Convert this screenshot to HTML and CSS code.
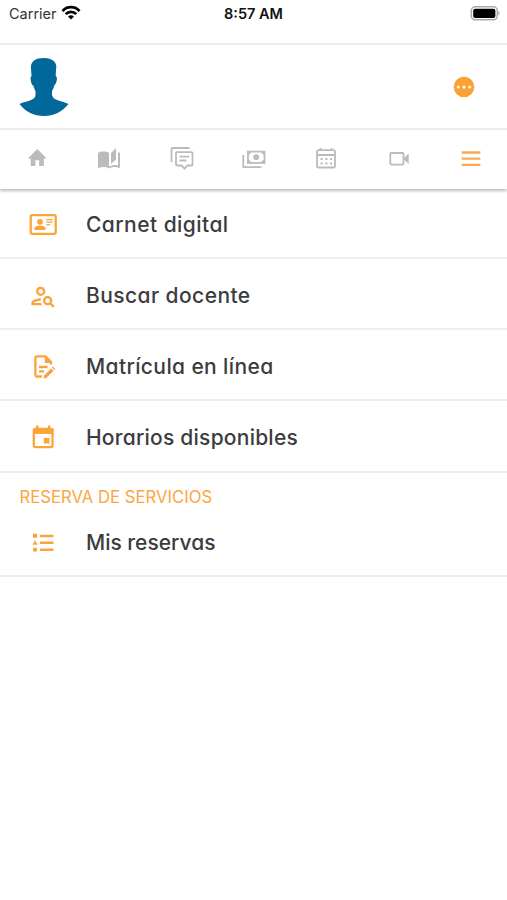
FILE: index.html
```
<!DOCTYPE html>
<html lang="es">
<head>
<meta charset="utf-8">
<title>Menú</title>
<link rel="stylesheet" href="styles.css">
</head>
<body>
<div class="status">
  <div class="carrier"><span>Carrier</span>
    <svg width="20" height="16" viewBox="0 0 20 16" fill="none" stroke="#000" stroke-width="2.7"><path d="M1.500 6.100C6 .9 14 .9 18.500 6.100M4.700 9.200C7.600 6 12.400 6 15.300 9.200"/><path d="M10 14.500L7 11.500Q10 9 13 11.500Z" fill="#000" stroke="none"/></svg>
  </div>
  <time>8:57 AM</time>
  <svg class="battery" width="32" height="16" viewBox="0 0 32 16"><rect x="2.300" y="1.800" width="26" height="13" rx="4" fill="#fff" stroke="#aaa" stroke-width="1.500"/><rect x="4.200" y="3.700" width="22.200" height="9.200" rx="2" fill="#000"/><path d="M29.500 6q2.500 2.300 0 4.600z" fill="#aaa"/></svg>
</div>
<header class="header">
  <svg width="50" height="60" viewBox="0 0 50 60" fill="#01689b"><path d="M12 12C11 4 17 1 25 1s14 4 12 12l-.3 6c2 1 1.300 5-.2 8-.5 1-1 1-1.300 1.500-.4 2-.8 3.500-2.200 5.500v4c1 4 4 4.500 8 6 3.500 1.300 6.500 1.800 8.500 3C43 55 35 59 25 59S6.500 55 .5 47c2.500-1.500 6-2 9-3 4-1.500 6.500-2.500 7-6v-4c-1.300-2-1.800-4-2.200-5.500-1 0-1.600-1-2.100-3-.7-3-1.200-5.500.3-6.500z"/></svg>
  <svg width="22" height="22" viewBox="0 0 22 22"><circle cx="11" cy="11" r="10.300" fill="#fca235"/><g fill="#fff"><circle cx="5.300" cy="11" r="1.600"/><circle cx="11" cy="11" r="1.600"/><circle cx="16.700" cy="11" r="1.600"/></g></svg>
</header>
<nav class="tabs">
  <svg viewBox="0 0 24 24"><path transform="translate(1 .2) scale(.94)" d="M10 20v-6h4v6h5v-8h3L12 2 2 12h3v8z"/></svg>
  <svg viewBox="0 0 24 24"><path d="M19 1l-5 5v11l5-4.500V1zM1 6v14.650c0 .25.25.5.5.5C3.100 20.450 5.050 20 6.500 20c1.950 0 4.050.4 5.500 1.500V6c-1.450-1.100-3.550-1.500-5.500-1.500S2.450 4.900 1 6zM23 19.500V6c-.6-.45-1.250-.75-2-1v13.500c-1.100-.35-2.300-.5-3.500-.5-1.700 0-4.150.65-5.500 1.500v2c1.350-.85 3.800-1.500 5.500-1.500 1.650 0 3.350.3 4.750 1.050.5.100.75-.15.750-.45z"/></svg>
  <svg class="line" viewBox="0 0 24 24"><path d="M1.500 15V2q0-1 1-1H19.500M7 5.200h14.500q1 0 1 1v11.300q0 1-1 1h-4l-3 3.200-3-3.200H7q-1 0-1-1V6.200q0-1 1-1zM9.500 9.700h9.800M9.500 13.500h7"/></svg>
  <svg class="line" viewBox="0 0 24 24"><path d="M1.300 8v12.200H19.500M6 4.700h16.500v11.100H6z"/><circle cx="14.200" cy="10.200" r="2.900" class="solid"/><path class="solid" d="M5 4h4.500Q9 7.500 5.500 8zM23 4v4Q19.500 7.500 19 4zM5 16.500v-4Q9 13 9.500 16.500zM23 16.500h-4Q19.500 13 23 12.500z"/></svg>
  <svg class="line" viewBox="0 0 24 24"><path d="M4.500 3.200h15q1.500 0 1.500 1.500v14q0 1.800-1.500 1.800h-15Q3 20.500 3 18.700v-14q0-1.500 1.500-1.500zM3 8h18M6.500 1v3M17.500 1v3"/><path class="dots" d="M6.500 12h12M6.500 16.500h12"/></svg>
  <svg class="line" viewBox="0 0 24 24"><rect x="3.300" y="6" width="13.200" height="11.600" rx="1"/><path class="solid" d="M17 11l4.700-4.500v10.600L17 12.600z"/></svg>
  <svg class="active" viewBox="0 0 24 24"><path d="M2.700 5.500h18.700M2.700 11.700h18.700M2.700 17.800h18.700"/></svg>
</nav>
<main>
  <div class="row first">
    <svg viewBox="0 0 28 28"><rect x="1.700" y="4.200" width="25" height="18.600" rx="1.500" class="stroke"/><circle cx="11" cy="10.800" r="2.900"/><path d="M5.500 19v-1.400c0-4 11-4 11 0V19zM17.200 8h6.500v1.300h-6.500zM17.200 10.500h6.500v1.300h-6.500zM17.200 13h4v1.300h-4z"/></svg>
    <span class="label l1">Carnet digital</span>
  </div>
  <div class="row">
    <svg viewBox="0 0 24 24"><path d="M10 12c2.210 0 4-1.790 4-4s-1.790-4-4-4-4 1.790-4 4 1.790 4 4 4zm0-6c1.100 0 2 .9 2 2s-.9 2-2 2-2-.9-2-2 .9-2 2-2zM4 18c.22-.72 3.310-2 6-2 0-.7.13-1.370.35-1.990C7.620 13.910 2 15.270 2 18v2h9.540c-.52-.58-.93-1.250-1.190-2H4zM19.430 18.020c.36-.59.57-1.280.57-2.020 0-2.210-1.790-4-4-4s-4 1.790-4 4 1.790 4 4 4c.74 0 1.430-.22 2.020-.57L20.590 22 22 20.590l-2.570-2.570zM16 18c-1.100 0-2-.9-2-2s.9-2 2-2 2 .9 2 2-.9 2-2 2z"/></svg>
    <span class="label l2">Buscar docente</span>
  </div>
  <div class="row">
    <svg viewBox="0 0 28 28"><path class="stroke" d="M13 23.500H7.700q-1.300 0-1.300-1.300V4.600q0-1.300 1.300-1.300h8.800L22 9v2.500M10 14h8.500M10 18.400h5"/><path d="M15.800 2.500L23 10h-7.200zM15 22.600l7.200-7.200 2.400 2.400-7.200 7.200-2.900.6zM23 14.600l1-1 2.400 2.400-1 1z"/></svg>
    <span class="label l3">Matrícula en línea</span>
  </div>
  <div class="row">
    <svg viewBox="0 0 28 28"><path class="stroke" d="M6.500 5h15.300q1.700 0 1.700 1.700v14.800q0 1.600-1.700 1.600H6.500q-1.700 0-1.700-1.600V6.700q0-1.700 1.700-1.700z"/><path d="M4 4.500h20.500V10H4zM7 1.500h2.500v4H7zM18.800 1.500h2.500v4h-2.500zM14.800 14h5.700v5.500h-5.700z"/></svg>
    <span class="label l4">Horarios disponibles</span>
  </div>
  <section class="row services">
    <h2>RESERVA DE SERVICIOS</h2>
    <div class="service">
      <svg viewBox="0 0 28 28"><path d="M4 4.800h4v4H4zM6 11.300l2.600 4.500H3.400zM11 5.700h13.500v2.500H11zM11 12.500h13.500V15H11zM11 19.400h13.500v2.500H11z"/><circle cx="6" cy="20.600" r="2.200"/></svg>
      <span class="label">Mis reservas</span>
    </div>
  </section>
</main>
</body>
</html>
```
FILE: styles.css
```
* { box-sizing: border-box; }
body {
  margin: 0;
  height: 900px;
  background: #fff;
  color: #3c3c3e;
  font-family: Inter, "Liberation Sans", sans-serif;
}
svg { display: block; flex: none; }
.status {
  display: grid;
  grid-template-columns: 1fr auto 1fr;
  height: 44.5px;
  padding: 5px 6px 0 9px;
  border-bottom: 2px solid #ececec;
  color: #111;
  font-size: 14.5px;
  line-height: 18px;
}
.carrier { display: flex; gap: 4px; color: #333; }
.status time { font-weight: 600; font-size: 14.5px; margin-right: 3px; }
.battery { justify-self: end; }
.header {
  display: flex;
  align-items: center;
  justify-content: space-between;
  height: 85.5px;
  padding: 2px 32px 0 18.5px;
  border-bottom: 2px solid #ececec;
}
.tabs {
  display: grid;
  grid-template-columns: repeat(7, 1fr);
  place-items: center;
  height: 59px;
  padding: 0 0 2px 1px;
  box-shadow: 0 2px 3px #bcbcbc;
}
.tabs svg { width: 24px; height: 24px; fill: #b8bcbe; }
.tabs .line { fill: none; stroke: #b8bcbe; stroke-width: 1.8; }
.tabs .solid { fill: #b8bcbe; stroke: none; }
.tabs .dots { stroke-width: 2.2; stroke-dasharray: 2.2 2.5; }
.tabs .active { stroke: #f9aa50; stroke-width: 2.3; }
.row {
  display: flex;
  align-items: center;
  height: 71.4px;
  padding: 5px 0 0 29px;
  border-bottom: 2px solid #eee;
}
.row.first { height: 69.5px; }
.row svg { width: 28px; height: 28px; margin-right: 29px; fill: #fca43c; }
.row .stroke { fill: none; stroke: #fca43c; stroke-width: 2.3; }
.label {
  font-size: 21px;
  font-weight: 500;
  line-height: 28px;
  white-space: nowrap;
  font-feature-settings: "cv11";
}
.l1 { letter-spacing: .45px; }
.l2 { letter-spacing: .43px; }
.l3 { letter-spacing: .38px; }
.l4 { letter-spacing: .23px; }
.row.services { display: block; height: 104px; padding: 14.5px 0 0; }
.services h2 {
  margin: 0;
  padding-left: 19.5px;
  color: #fca642;
  font-size: 16.7px;
  font-weight: 400;
  line-height: 20px;
}
.service { display: flex; align-items: center; padding: 21.5px 0 0 29px; }
```
